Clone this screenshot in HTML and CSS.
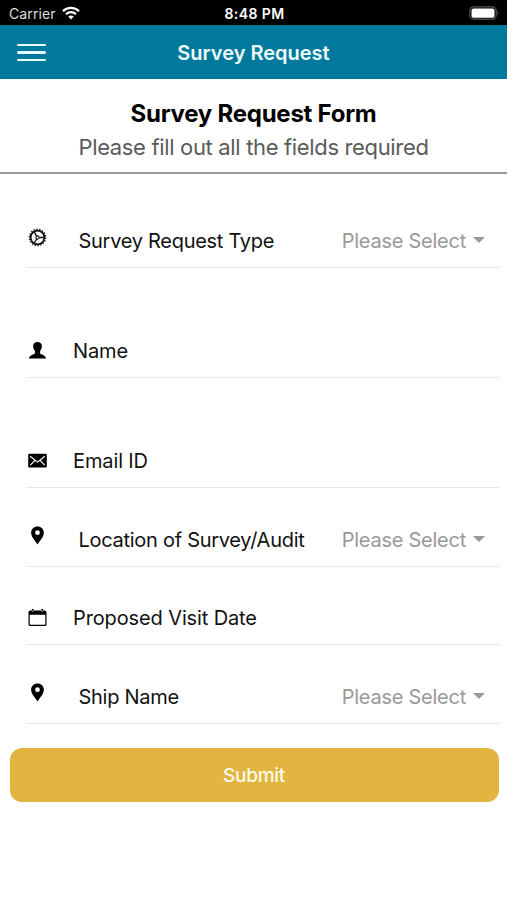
FILE: index.html
```html
<!DOCTYPE html>
<html lang="en">
<head>
<meta charset="utf-8">
<title>Survey Request</title>
<link rel="stylesheet" href="styles.css">
</head>
<body>
<div class="status">
  <div class="carrier"><span>Carrier</span>
    <svg class="wifi" width="18" height="14" viewBox="0 0 18 14" fill="none" stroke="#fff" stroke-width="2.3"><path d="M1 5.2C5.4.7 12.6.7 17 5.2M4 8.2c2.8-2.8 7.2-2.8 10 0"/><path d="M6.2 10.5c1.6-1.5 4-1.5 5.6 0L9 13.4z" fill="#fff" stroke="none"/></svg>
  </div>
  <span class="time">8:48 PM</span>
  <svg class="battery" width="31" height="14" viewBox="0 0 31 14"><rect x=".8" y=".8" width="26.4" height="12.4" rx="4" fill="none" stroke="#555" stroke-width="1.2"/><rect x="2.5" y="2.4" width="23" height="9.4" rx="2" fill="#fff"/><path d="M28.5 4.5q2 2.5 0 5z" fill="#555"/></svg>
</div>
<header class="navbar">
  <button class="menu" aria-label="Menu"><i></i><i></i><i></i></button>
  <h1>Survey Request</h1>
</header>
<section class="intro">
  <h2>Survey Request Form</h2>
  <p>Please fill out all the fields required</p>
</section>
<form class="form">
  <div class="row first picker">
    <svg class="icon" viewBox="0 0 20 20" fill="none" stroke="#111"><circle cx="10" cy="10" r="8.6" stroke-width="1.4" stroke-dasharray="1.5 1.502"/><circle cx="10" cy="10" r="7.2" stroke-width="1.9"/><circle cx="10" cy="10" r="1.7" stroke-width="1.1"/><path d="M11.7 10H17M9.1 8.5 6.5 4M9.1 11.5 6.5 16" stroke-width="1.4"/></svg>
    <label>Survey Request Type</label><span class="value">Please Select</span><i class="caret"></i>
  </div>
  <div class="row tall">
    <svg class="icon" viewBox="0 0 20 20"><path d="M10 1c3 0 4.700 1.900 4.600 4.600-.1 2.200-.8 3.700-1.900 5v2.200c.3 1.500 6.300 1.700 6.300 5.700H1c0-4 6-4.200 6.300-5.700v-2.200c-1.100-1.300-1.800-2.800-1.900-5C5.300 2.900 7 1 10 1z"/></svg>
    <label>Name</label>
  </div>
  <div class="row tall">
    <svg class="icon" viewBox="0 0 20 20"><rect x=".2" y="3" width="19.600" height="14.400" rx="1.400"/><path d="M2.300 5.500 10 11.700l7.700-6.200M2.500 14.900l4.700-5M17.500 14.900l-4.700-5" fill="none" stroke="#fff" stroke-width="1.200"/></svg>
    <label>Email ID</label>
  </div>
  <div class="row picker">
    <svg class="icon" viewBox="0 0 20 20"><path fill-rule="evenodd" d="M10 .5c3.800 0 6.700 2.800 6.700 6.500 0 4.500-4 8-6.700 12.500C7.300 15 3.300 11.500 3.300 7 3.300 3.300 6.200.5 10 .5zm0 4a2.500 2.500 0 1 0 0 5 2.500 2.500 0 0 0 0-5z"/></svg>
    <label>Location of Survey/Audit</label><span class="value">Please Select</span><i class="caret"></i>
  </div>
  <div class="row">
    <svg class="icon" viewBox="0 0 20 20"><path fill-rule="evenodd" d="M2.500 2.500H4V1h2v1.500h8V1h2v1.500h1.500q2 0 2 2v12.500q0 2-2 2h-15q-2 0-2-2V4.500q0-2 2-2zM1.800 7v9.700q0 1 1 1h14.400q1 0 1-1V7z"/><path d="M3.700 2.500q1.300 2 2.600 0M13.700 2.500q1.300 2 2.600 0" fill="none" stroke="#fff" stroke-width=".8"/></svg>
    <label>Proposed Visit Date</label>
  </div>
  <div class="row picker">
    <svg class="icon" viewBox="0 0 20 20"><path fill-rule="evenodd" d="M10 .5c3.800 0 6.700 2.800 6.700 6.500 0 4.500-4 8-6.700 12.500C7.300 15 3.300 11.500 3.300 7 3.300 3.300 6.200.5 10 .5zm0 4a2.500 2.500 0 1 0 0 5 2.500 2.500 0 0 0 0-5z"/></svg>
    <label>Ship Name</label><span class="value">Please Select</span><i class="caret"></i>
  </div>
  <button class="submit" type="button">Submit</button>
</form>
</body>
</html>
```
FILE: styles.css
```css
* { box-sizing: border-box; }
body {
  margin: 0;
  background: #fff;
  color: #111;
  font-family: Inter, "Liberation Sans", sans-serif;
}
h1, h2, p { margin: 0; }
.status {
  display: grid;
  grid-template-columns: 1fr auto 1fr;
  align-items: center;
  height: 25px;
  padding: 2px 7px 0 9px;
  background: #000;
  color: #fff;
  font-size: 14px;
}
.carrier { display: flex; align-items: center; gap: 6px; color: #ddd; letter-spacing: 0.1px; }
.wifi { margin-top: -2px; }
.time { font-weight: 600; font-size: 14px; letter-spacing: 0.4px; }
.battery { justify-self: end; margin-top: -1px; }
.navbar {
  display: grid;
  grid-template-columns: 60px 1fr 60px;
  align-items: center;
  height: 54px;
  background: #00799c;
  color: #effcff;
}
.menu {
  display: flex;
  flex-direction: column;
  gap: 5px;
  width: 29px;
  margin: 1px 0 0 16.500px;
  padding: 0;
  border: 0;
  background: none;
}
.menu i { height: 2.500px; border-radius: 2px; background: #e4fbff; }
h1 { padding-top: 1px; text-align: center; font-size: 20px; font-weight: 600; line-height: 24px; }
.intro {
  height: 95px;
  padding-top: 20px;
  border-bottom: 2px solid #999;
  text-align: center;
}
h2 { color: #000; font-size: 24px; font-weight: 700; line-height: 29px; letter-spacing: -0.25px; }
.intro p { margin-top: 6px; color: #5b5b5b; font-size: 22px; line-height: 27px; letter-spacing: -0.34px; }
.form { padding: 0 7px 0 26px; }
.row {
  display: flex;
  align-items: flex-end;
  height: 78.500px;
  padding-bottom: 13px;
  border-bottom: 1px solid #e8e8e8;
}
.first { height: 93.500px; }
.tall { height: 110.250px; }
.icon { width: 19px; height: 19px; margin: 0 26px 4px 2px; fill: #000; }
.first .icon { fill: none; }
.picker .icon { margin-right: 31.500px; margin-bottom: 8px; }
.first.picker .icon { margin-bottom: 7px; }
label { font-size: 20px; line-height: 26px; letter-spacing: -0.12px; white-space: nowrap; }
.picker label { letter-spacing: -0.28px; }
.value { margin-left: auto; color: #999; font-size: 20px; line-height: 26px; letter-spacing: -0.25px; }
.caret {
  margin: 0 15px 11px 7px;
  border: 6px solid transparent;
  border-top-color: #999;
  border-bottom: 0;
}
.submit {
  display: block;
  width: 489px;
  height: 54px;
  margin: 24px 0 0 -16.500px;
  padding-top: 3px;
  border: 0;
  border-radius: 12px;
  background: #e2b540;
  color: #fffbea;
  font: 500 19px Inter, sans-serif;
  letter-spacing: -0.3px;
}
```
